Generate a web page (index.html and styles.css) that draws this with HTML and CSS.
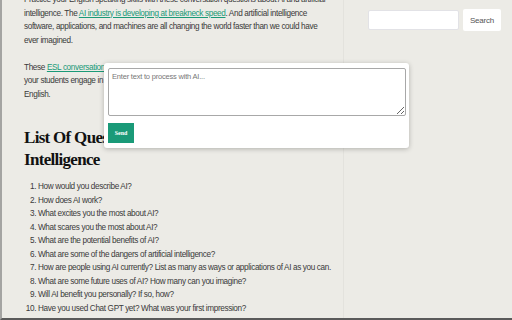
FILE: index.html
```html
<!DOCTYPE html>
<html>
<head>
	<meta charset="UTF-8">
	<title>AI Conversation Questions</title>
	<link rel="stylesheet" href="styles.css">
</head>
<body>
	<div id="page">
		<main id="content">
			<p>
				Practice your English speaking skills with these conversation questions about AI and artificial<br>
				intelligence. The <a href="">AI industry is developing at breakneck speed</a>. And artificial intelligence<br>
				software, applications, and machines are all changing the world faster than we could have<br>
				ever imagined.
			</p>
			<p>
				These <a href="">ESL conversation questions</a> about artificial intelligence will help<br>
				your students engage in interesting discussions about the future while they practice their<br>
				English.
			</p>

			<h2>List Of Questions About Artificial Intelligence</h2>

			<ol>
				<li>How would you describe AI?</li>
				<li>How does AI work?</li>
				<li>What excites you the most about AI?</li>
				<li>What scares you the most about AI?</li>
				<li>What are the potential benefits of AI?</li>
				<li>What are some of the dangers of artificial intelligence?</li>
				<li>How are people using AI currently? List as many as ways or applications of AI as you can.</li>
				<li>What are some future uses of AI? How many can you imagine?</li>
				<li>Will AI benefit you personally? If so, how?</li>
				<li>Have you used Chat GPT yet? What was your first impression?</li>
			</ol>
		</main>

		<aside id="sidebar">
			<form class="search">
				<input type="text" class="search-field">
				<button type="button" class="search-btn">Search</button>
			</form>
		</aside>
	</div>

	<div id="ai-popup">
		<textarea placeholder="Enter text to process with AI..."></textarea>
		<button type="button" class="send">Send</button>
	</div>
</body>
</html>
```

FILE: styles.css
```css
html,
body
{
	margin: 0;
	height: 320px;
	overflow: hidden;
}

body
{
	box-sizing: border-box;
	background: #ecebe6;
	border-left: 2px solid #a4a4a2;
	border-bottom: 2px solid #5a5a5a;
	font-family: "Liberation Sans", Arial, sans-serif;
	font-size: 8.2px;
	letter-spacing: -0.36px;
	color: #3a3a3a;
}

#page
{
	display: grid;
	grid-template-columns: 341px 1fr;
	height: 100%;
}

#content
{
	padding: 0 2px 0 22px;
	margin-top: -7px;
	line-height: 13.5px;
}

#content p
{
	margin: 0 0 13.5px 0;
}

#content a
{
	color: #1a9a78;
	text-decoration: underline;
}

#content h2
{
	margin: 26px 0 9px 0;
	font-family: "Liberation Serif", "Times New Roman", serif;
	font-weight: bold;
	font-size: 17px;
	line-height: 22px;
	letter-spacing: -0.7px;
	color: #111;
	width: 280px;
}

#content ol
{
	margin: 0;
	padding-left: 14px;
	line-height: 13.5px;
}

#sidebar
{
	border-left: 1px solid #e3e2dd;
	padding: 9px 10px 0 24px;
}

.search
{
	display: flex;
	align-items: flex-start;
	gap: 4px;
}

.search-field
{
	width: 91px;
	height: 20px;
	margin-top: 1px;
	box-sizing: border-box;
	border: 1px solid #e2e2e6;
	border-radius: 2px;
	background: #fff;
}

.search-btn
{
	width: 38px;
	height: 22px;
	border: 0;
	border-radius: 2px;
	background: #fff;
	color: #555;
	font-family: "Liberation Sans", Arial, sans-serif;
	font-size: 8px;
	letter-spacing: -0.2px;
}

#ai-popup
{
	position: absolute;
	top: 63px;
	left: 104px;
	width: 305px;
	box-sizing: border-box;
	padding: 5px 3px 5px 4px;
	background: #fff;
	border-radius: 3px;
	box-shadow: 0 1px 5px rgba(0, 0, 0, 0.25);
}

#ai-popup textarea
{
	display: block;
	width: 298px;
	height: 48px;
	box-sizing: border-box;
	margin: 0 0 7px 0;
	padding: 3px 3px;
	border: 1px solid #a8a8a8;
	border-radius: 2px;
	font-family: "Liberation Sans", Arial, sans-serif;
	font-size: 7.5px;
	letter-spacing: -0.2px;
	resize: vertical;
}

#ai-popup textarea::placeholder
{
	color: #777;
}

#ai-popup .send
{
	display: block;
	width: 26px;
	height: 20px;
	padding: 0;
	border: 0;
	background: #1a9a78;
	color: #fff;
	font-family: "Liberation Serif", serif;
	font-weight: bold;
	font-size: 6px;
}
```
